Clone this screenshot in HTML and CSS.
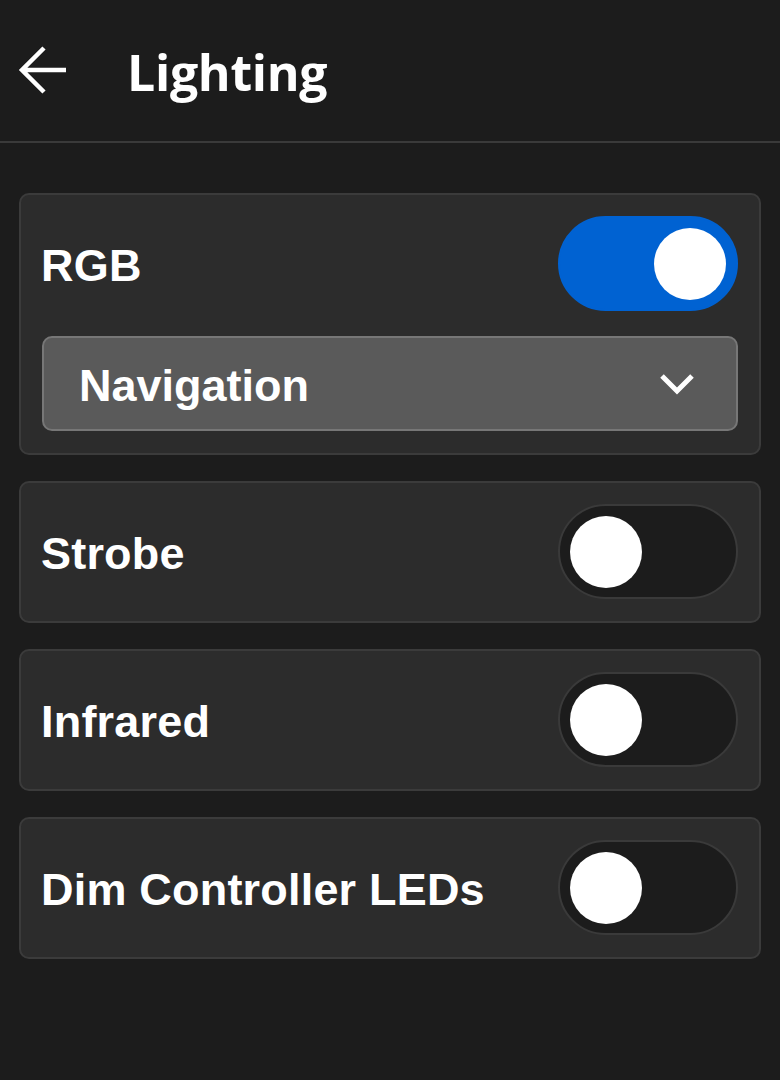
FILE: index.html
```html
<!DOCTYPE html>
<html lang="en">
<head>
<meta charset="utf-8">
<title>Lighting</title>
<link rel="stylesheet" href="styles.css">
</head>
<body>
<header class="topbar">
  <svg class="back" viewBox="0 0 52 52" width="52" height="52" aria-hidden="true">
    <path d="M50 26 H6 M28 4 L6 26 L28 48" fill="none" stroke="#fff" stroke-width="4.5" stroke-linecap="butt" stroke-linejoin="miter"/>
  </svg>
  <h1 class="title">Lighting</h1>
</header>
<main class="list">
  <section class="card">
    <div class="row">
      <span class="label">RGB</span>
      <span class="toggle on"><span class="knob"></span></span>
    </div>
    <div class="select">
      <span class="select-text">Navigation</span>
      <svg class="chevron" viewBox="0 0 36 24" width="36" height="24" aria-hidden="true">
        <path d="M3 4 L18 19 L33 4" fill="none" stroke="#fff" stroke-width="5"/>
      </svg>
    </div>
  </section>
  <section class="card">
    <div class="row">
      <span class="label">Strobe</span>
      <span class="toggle"><span class="knob"></span></span>
    </div>
  </section>
  <section class="card">
    <div class="row">
      <span class="label">Infrared</span>
      <span class="toggle"><span class="knob"></span></span>
    </div>
  </section>
  <section class="card">
    <div class="row">
      <span class="label">Dim Controller LEDs</span>
      <span class="toggle"><span class="knob"></span></span>
    </div>
  </section>
</main>
</body>
</html>
```
FILE: styles.css
```css
* { box-sizing: border-box; }
html, body { margin: 0; padding: 0; }
body {
  background: #1c1c1c;
  color: #fff;
  font-family: "Liberation Sans", Arial, sans-serif;
  width: 780px;
  height: 1080px;
  overflow: hidden;
}
.topbar {
  height: 143px;
  border-bottom: 2px solid #3a3a3a;
  display: flex;
  align-items: center;
  padding-left: 16px;
  padding-bottom: 2px;
}
.back { display: block; flex: none; overflow: visible; }
.title {
  margin: 4px 0 0 59px;
  font-family: "Open Sans", "Noto Sans", sans-serif;
  font-weight: 700;
  font-size: 50px;
  line-height: 1;
  letter-spacing: -0.3px;
}
.list {
  padding: 50px 19px 0;
  display: flex;
  flex-direction: column;
  gap: 26px;
}
.card {
  background: #2c2c2c;
  border: 2px solid #3b3b3b;
  border-radius: 10px;
  padding: 21px 21px 22px 21px;
}
.row {
  height: 95px;
  display: flex;
  align-items: center;
  justify-content: space-between;
}
.label {
  font-size: 45px;
  font-weight: 700;
  margin: 4px 0 0 -1px;
  letter-spacing: 0.2px;
}
.toggle {
  width: 180px;
  height: 95px;
  border-radius: 48px;
  border: 2px solid #3a3a3a;
  background: #1c1c1c;
  display: flex;
  align-items: center;
  padding: 0 10px;
  flex: none;
}
.toggle.on {
  background: #0062d2;
  border-color: #0062d2;
  justify-content: flex-end;
}
.knob {
  width: 72px;
  height: 72px;
  border-radius: 50%;
  background: #fff;
}
.select {
  margin-top: 25px;
  height: 95px;
  background: #5a5a5a;
  border: 2px solid #777;
  border-radius: 10px;
  display: flex;
  align-items: center;
  justify-content: space-between;
  padding: 0 41px 0 35px;
}
.select-text {
  font-size: 45px;
  font-weight: 700;
  margin-top: 4px;
  letter-spacing: 0;
}
.chevron { display: block; margin-top: 0; }
```
